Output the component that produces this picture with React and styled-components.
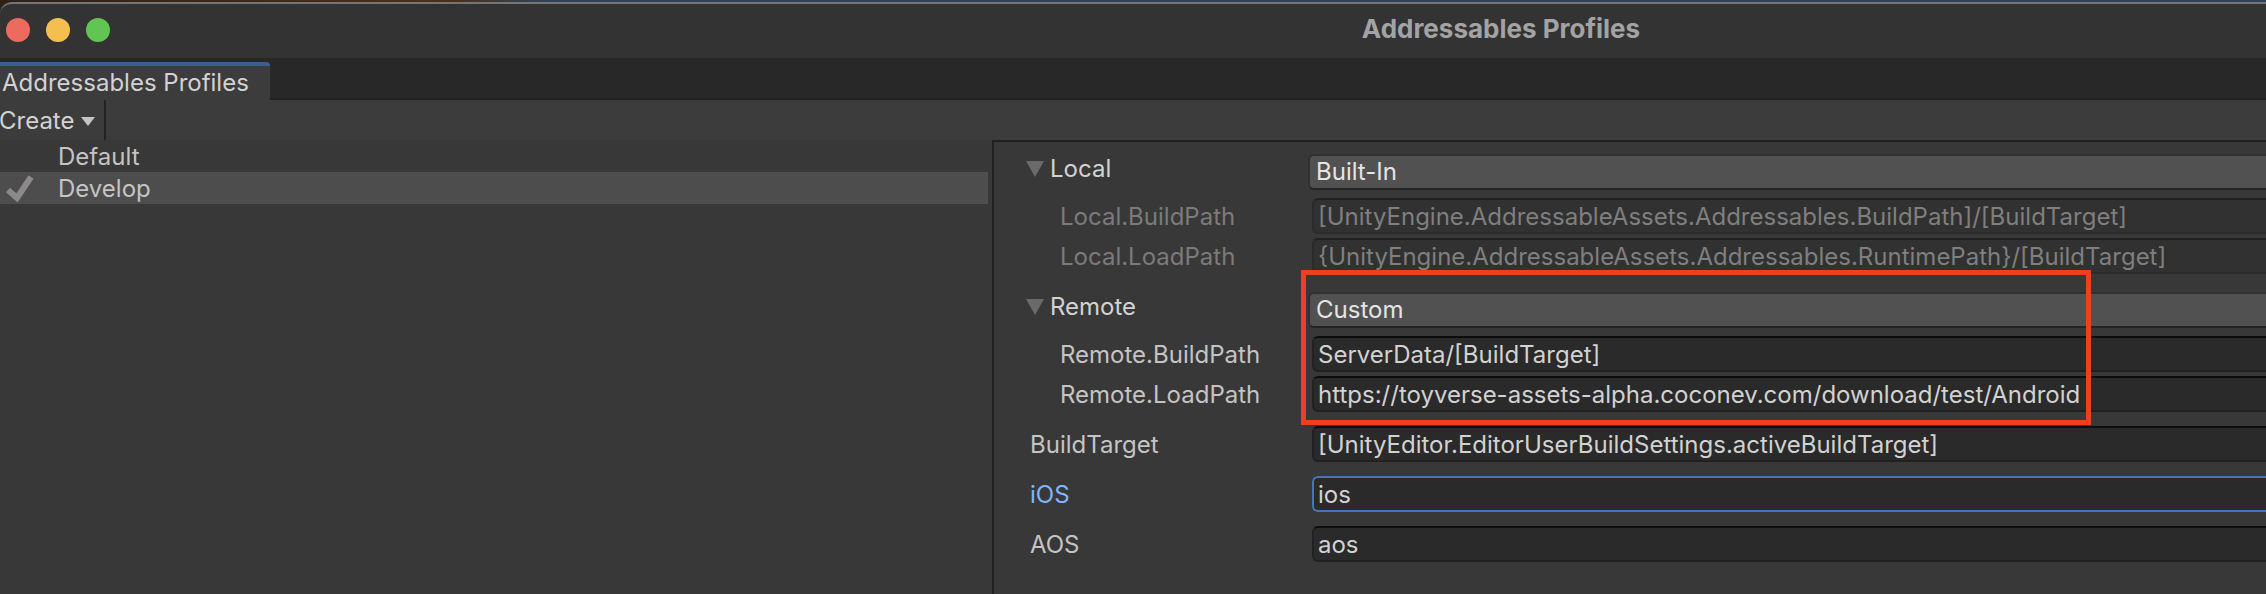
import React, { useState } from "react";
import styled, { createGlobalStyle } from "styled-components";

const GlobalStyle = createGlobalStyle`
  *, *::before, *::after { box-sizing: border-box; }
  body {
    margin: 0;
    background: #383838;
    color: #c4c4c4;
    font-family: Inter, "Liberation Sans", sans-serif;
    font-size: 24px;
    line-height: 32px;
  }
  button, input, select { font: inherit; color: inherit; }
`;

const Window = styled.div`
  display: flex;
  flex-direction: column;
  min-height: 100vh;
  overflow: hidden;
  background: #383838;
  border-bottom: 1px solid #332f33;
`;

const Desktop = styled.div`
  padding-top: 2px;
  background: linear-gradient(90deg, #2e2118 0, #4a2f1c 20%, #33445a 24%, #33445a 100%);
`;

const TitleBar = styled.header`
  display: flex;
  align-items: center;
  height: 56px;
  padding: 0 0 2px 6px;
  background: #333333;
  border-top: 2px solid #757575;
  border-top-left-radius: 12px;
`;

const Lights = styled.div`
  display: flex;
  gap: 16px;
`;

const Light = styled.button`
  width: 24px;
  height: 24px;
  padding: 0;
  border: 0;
  border-radius: 50%;
  background: ${(p) => p.$color};
`;

const Title = styled.h1`
  flex: 1;
  margin: 0;
  padding: 0 0 2px 626px;
  font-size: 26px;
  line-height: 32px;
  font-weight: 700;
  text-align: center;
  color: #a3a3a3;
`;

const TabStrip = styled.div`
  display: flex;
  height: 42px;
  padding-top: 4px;
  background: #282828;
  box-shadow: inset 0 -2px #232323;
`;

const Tab = styled.button`
  width: 270px;
  padding: 0 0 0 2px;
  border: 0;
  border-top: 4px solid #3a5f92;
  border-top-right-radius: 4px;
  background: #3c3c3c;
  color: #d2d2d2;
  line-height: 32px;
  text-align: left;
  white-space: nowrap;
`;

const Toolbar = styled.div`
  display: flex;
  height: 40px;
  background: #3c3c3c;
`;

const CreateButton = styled.button`
  display: flex;
  align-items: center;
  gap: 7px;
  width: 106px;
  padding: 2px 0 0;
  border: 0;
  border-right: 2px solid #232323;
  background: transparent;
  color: #d2d2d2;

  span { margin-left: -1px; }
`;

const Body = styled.main`
  flex: 1;
  display: grid;
  grid-template-columns: minmax(0, 992fr) minmax(0, 1274fr);
`;

const ProfileList = styled.ul`
  margin: 0;
  padding: 0 4px 0 0;
  list-style: none;
`;

const ProfileItem = styled.li`
  display: flex;
  align-items: center;
  height: 32px;
  padding-top: 2px;
  background: ${(p) => (p.$selected ? "#4d4d4d" : "transparent")};
`;

const Mark = styled.span`
  display: flex;
  width: 58px;
  padding-left: 6px;
`;

const Details = styled.form`
  display: flex;
  flex-direction: column;
  gap: 14px;
  padding: 12px 0 32px;
  border-top: 2px solid #202020;
  border-left: 2px solid #202020;
`;

const Group = styled.section`
  position: relative;
  display: flex;
  flex-direction: column;
  gap: 4px;

  & + & { margin-top: 4px; }
`;

const Row = styled.div`
  display: grid;
  grid-template-columns: 314px minmax(0, 1fr);
  margin-bottom: ${(p) => (p.$head ? "4px" : "0")};
`;

const Foldout = styled.button`
  display: flex;
  align-items: center;
  gap: 6px;
  height: 30px;
  padding: 0 0 0 32px;
  border: 0;
  background: transparent;
  color: #d2d2d2;
`;

const Label = styled.label`
  display: flex;
  align-items: center;
  padding: 2px 0 0 ${(p) => (p.$nested ? "66px" : "36px")};
  color: ${(p) => (p.$disabled ? "#7b7b7b" : p.$active ? "#81b4ff" : "#c4c4c4")};
`;

const Dropdown = styled.select`
  appearance: none;
  height: 36px;
  padding: 0 6px;
  border: 2px solid #303030;
  border-bottom-color: #242424;
  border-right: 0;
  border-radius: 6px 0 0 6px;
  outline: 0;
  background: #515151;
  color: #e4e4e4;
`;

const Field = styled.input`
  height: 36px;
  min-width: 0;
  margin-left: 4px;
  padding: 0 4px;
  border: 2px solid #212121;
  border-top-color: #0d0d0d;
  border-right: 0;
  border-radius: 6px 0 0 6px;
  outline: 0;
  background: #2a2a2a;
  color: #d2d2d2;

  ${(p) => p.$active && "border-color: #4676b8;"}

  &:disabled {
    border-color: #2b2b2b;
    border-top-color: #212121;
    background: #313131;
    color: #7f7f7f;
  }
`;

const Highlight = styled.div`
  position: absolute;
  top: -22px;
  left: 307px;
  width: 790px;
  height: 155px;
  border: 5px solid #ee3f24;
  pointer-events: none;
`;

const CaretIcon = () => (
  <svg width="14" height="9" viewBox="0 0 14 9" aria-hidden="true">
    <path d="M0 0h14L7 9z" fill="#c4c4c4" />
  </svg>
);

const FoldIcon = () => (
  <svg width="18" height="16" viewBox="0 0 18 16" aria-hidden="true">
    <path d="M0 0h18L9 16z" fill="#6a6a6a" />
  </svg>
);

const CheckIcon = () => (
  <svg width="28" height="28" viewBox="0 0 28 28" aria-hidden="true">
    <path d="M2 15l9 8L25 2" fill="none" stroke="#8b8989" strokeWidth="6" />
  </svg>
);

function PathField({ id, label, value, nested, disabled, active }) {
  const [text, setText] = useState(value);
  return (
    <Row>
      <Label htmlFor={id} $nested={nested} $disabled={disabled} $active={active}>{label}</Label>
      <Field
        id={id}
        value={text}
        spellCheck={false}
        disabled={disabled}
        $active={active}
        onChange={(e) => setText(e.target.value)}
      />
    </Row>
  );
}

function PathGroup({ name, mode, fields, disabled, highlighted }) {
  const [open, setOpen] = useState(true);
  return (
    <Group>
      <Row $head>
        <Foldout type="button" aria-expanded={open} onClick={() => setOpen(!open)}>
          <FoldIcon />
          {name}
        </Foldout>
        <Dropdown aria-label={name} defaultValue={mode}>
          <option>Built-In</option>
          <option>Custom</option>
        </Dropdown>
      </Row>
      {open && fields.map((f) => (
        <PathField key={f.label} id={f.label} label={f.label} value={f.value} disabled={disabled} nested />
      ))}
      {highlighted && <Highlight />}
    </Group>
  );
}

const LOCAL = [
  { label: "Local.BuildPath", value: "[UnityEngine.AddressableAssets.Addressables.BuildPath]/[BuildTarget]" },
  { label: "Local.LoadPath", value: "{UnityEngine.AddressableAssets.Addressables.RuntimePath}/[BuildTarget]" },
];
const REMOTE = [
  { label: "Remote.BuildPath", value: "ServerData/[BuildTarget]" },
  { label: "Remote.LoadPath", value: "https://toyverse-assets-alpha.coconev.com/download/test/Android" },
];

export default function App() {
  return (
    <>
      <GlobalStyle />
      <Window>
        <Desktop>
          <TitleBar>
            <Lights>
              <Light $color="#ed6a5e" aria-label="Close" />
              <Light $color="#f5bf4f" aria-label="Minimize" />
              <Light $color="#61c554" aria-label="Zoom" />
            </Lights>
            <Title>Addressables Profiles</Title>
          </TitleBar>
        </Desktop>
        <TabStrip>
          <Tab>Addressables Profiles</Tab>
        </TabStrip>
        <Toolbar>
          <CreateButton><span>Create</span><CaretIcon /></CreateButton>
        </Toolbar>
        <Body>
          <ProfileList>
            <ProfileItem><Mark />Default</ProfileItem>
            <ProfileItem $selected><Mark><CheckIcon /></Mark>Develop</ProfileItem>
          </ProfileList>
          <Details>
            <PathGroup name="Local" mode="Built-In" fields={LOCAL} disabled />
            <PathGroup name="Remote" mode="Custom" fields={REMOTE} highlighted />
            <PathField id="BuildTarget" label="BuildTarget" value="[UnityEditor.EditorUserBuildSettings.activeBuildTarget]" />
            <PathField id="iOS" label="iOS" value="ios" active />
            <PathField id="AOS" label="AOS" value="aos" />
          </Details>
        </Body>
      </Window>
    </>
  );
}
